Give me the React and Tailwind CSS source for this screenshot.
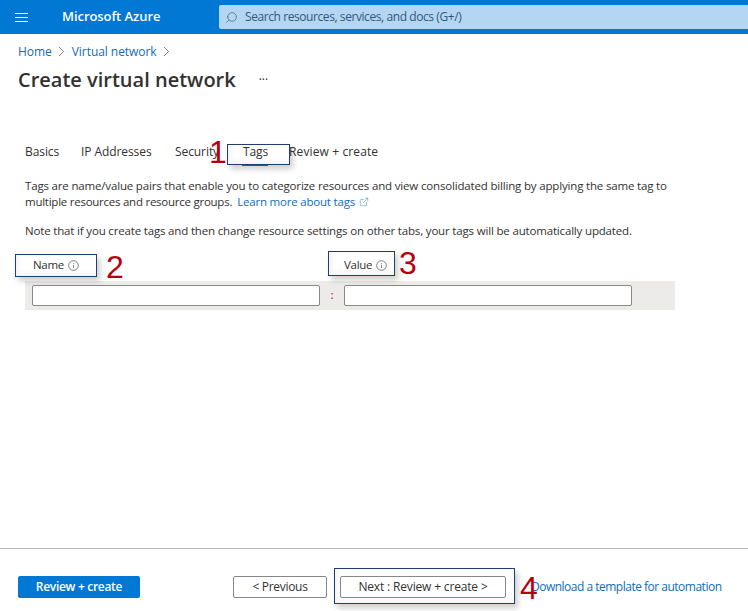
import { ExternalLink, Search } from "lucide-react";

const font = { fontFamily: '"Open Sans", "Noto Sans", sans-serif' };

const InfoIcon = () => (
  <svg width="11" height="11" viewBox="0 0 11 11" fill="none" stroke="#605e5c" strokeWidth="0.8">
    <circle cx="5.5" cy="5.5" r="4.8" />
    <path d="M5.5 4.8v3.2M5.5 3v0.8" />
  </svg>
);

const Chevron = () => (
  <svg width="7" height="11" viewBox="0 0 7 11" fill="none" stroke="#605e5c" strokeWidth="0.8">
    <path d="M1 1l4.5 4.5L1 10" />
  </svg>
);

const Callout = ({ className }) => (
  <div className={`absolute border border-[#1f3f6e] shadow-[3px_4px_6px_rgba(0,0,0,0.2),inset_3px_-3px_5px_rgba(0,0,0,0.05)] pointer-events-none ${className}`} />
);

const Mark = ({ className, children }) => (
  <div className={`absolute text-[32px] leading-none text-[#b5000f] font-['Liberation_Sans',sans-serif] ${className}`}>
    {children}
  </div>
);

const tabs = [
  { label: "Basics", cls: "w-[56px]" },
  { label: "IP Addresses", cls: "w-[94px]" },
  { label: "Security", cls: "w-[67px]" },
  { label: "Tags", cls: "w-[47px]" },
  { label: "Review + create", cls: "tracking-[0.12px]" },
];

export default function App() {
  return (
    <div className="relative h-[611px] w-[748px] overflow-hidden bg-white text-[#323130] font-['Open_Sans',sans-serif]" style={font}>
      {/* top bar */}
      <header className="flex h-[34px] items-center bg-[#0078d4] text-white">
        <div className="ml-[15px] flex w-[13px] flex-col gap-[3px]">
          <span className="h-px bg-white" />
          <span className="h-px bg-white" />
          <span className="h-px bg-white" />
        </div>
        <span className="ml-[34px] w-[157px] text-[13px] font-semibold tracking-[-0.06px]">Microsoft Azure</span>
        <div className="flex h-[24px] flex-1 items-center gap-[7px] rounded-l-[2px] bg-[#b3d6f2] pl-[6px] text-[12px] tracking-[-0.42px] text-[#33587c]">
          <Search size={13} strokeWidth={1.2} className="-scale-x-100" />
          <span>Search resources, services, and docs (G+/)</span>
        </div>
      </header>

      {/* breadcrumb + title */}
      <nav className="mt-[9px] flex h-[17px] items-center pl-[18px] text-[12px] tracking-[-0.05px] text-[#0f6cbd]">
        <span>Home</span>
        <span className="ml-[6px] mr-[7px]"><Chevron /></span>
        <span>Virtual network</span>
        <span className="ml-[6px]"><Chevron /></span>
      </nav>
      <div className="mt-[6px] flex h-[28px] items-center pl-[18px]">
        <h1 className="text-[20px] font-semibold tracking-[0px] text-[#323130]">Create virtual network</h1>
        <span className="ml-[23px] text-[12px] leading-none">···</span>
      </div>

      {/* tabs */}
      <div className="mt-[48px] flex h-[19px] items-center pl-[25px] text-[12px] tracking-[-0.08px] whitespace-nowrap">
        {tabs.map((t) => (
          <div key={t.label} className={`relative ${t.cls} ${t.label === "Tags" ? "pl-[1px]" : ""}`}>
            {t.label}
            {t.label === "Tags" && <span className="absolute left-0 top-[21px] h-[2px] w-[26px] bg-[#0078d4]" />}
          </div>
        ))}
      </div>

      {/* description */}
      <div className="mt-[17px] pl-[25px] text-[11.5px] leading-[16px] tracking-[-0.17px]">
        <p>Tags are name/value pairs that enable you to categorize resources and view consolidated billing by applying the same tag to</p>
        <p className="flex items-center">
          <span className="tracking-[-0.25px]">multiple resources and resource groups.</span>
          <span className="ml-[5px] tracking-[-0.2px] text-[#0f6cbd]">Learn more about tags</span>
          <ExternalLink size={10} strokeWidth={1} className="ml-[4px] text-[#0f6cbd]" />
        </p>
        <p className="mt-[13px]">Note that if you create tags and then change resource settings on other tabs, your tags will be automatically updated.</p>
      </div>

      {/* name / value table */}
      <div className="mt-[18px] flex h-[16px] items-center text-[11.5px] font-medium tracking-[-0.3px]">
        <div className="flex w-[344px] items-center gap-[4px] pl-[33px]">Name <InfoIcon /></div>
        <div className="flex items-center gap-[4px]">Value <InfoIcon /></div>
      </div>
      <div className="ml-[25px] mt-[8px] flex h-[29px] w-[650px] items-center bg-[#edebe9] pl-[7px]">
        <input className="h-[21px] w-[288px] rounded-[2px] border border-[#8a8886] bg-white" />
        <span className="w-[24px] text-center text-[10px] font-semibold text-[#a4262c]">:</span>
        <input className="h-[21px] w-[288px] rounded-[2px] border border-[#8a8886] bg-white" />
      </div>

      {/* footer */}
      <footer className="mt-[238px] flex h-[63px] items-start border-t border-[#b8b8b8] pl-[18px] pt-[27px] text-[12px] tracking-[-0.3px]">
        <button className="h-[22px] w-[122px] rounded-[2px] bg-[#0078d4] font-semibold text-white">Review + create</button>
        <button className="ml-[93px] h-[22px] w-[94px] rounded-[2px] border border-[#8a8886] bg-white">&lt; Previous</button>
        <button className="ml-[13px] h-[22px] w-[166px] rounded-[2px] border border-[#8a8886] bg-white tracking-[-0.16px]">Next : Review + create &gt;</button>
        <span className="ml-[25px] flex h-[22px] items-center tracking-[-0.5px] text-[#0f6cbd]">Download a template for automation</span>
      </footer>

      {/* annotations */}
      <Callout className="left-[227px] top-[144px] h-[21px] w-[63px]" />
      <Callout className="left-[15px] top-[254px] h-[23px] w-[82px]" />
      <Callout className="left-[328px] top-[251px] h-[25px] w-[67px]" />
      <Callout className="left-[334px] top-[568px] h-[36px] w-[181px]" />
      <Mark className="left-[209px] top-[136px]">1</Mark>
      <Mark className="left-[106px] top-[251px]">2</Mark>
      <Mark className="left-[399px] top-[247px]">3</Mark>
      <Mark className="left-[520px] top-[572px]">4</Mark>
    </div>
  );
}
